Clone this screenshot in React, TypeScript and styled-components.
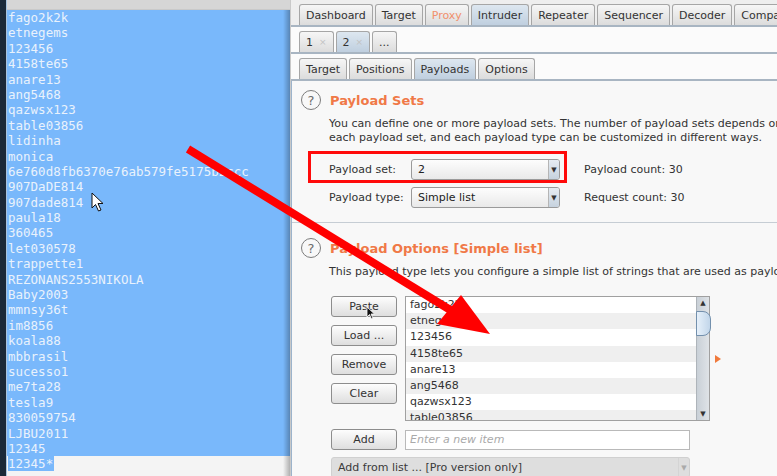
import React from "react";
import styled, { createGlobalStyle } from "styled-components";

const Global = createGlobalStyle`
  html, body { margin: 0; padding: 0; width: 777px; height: 476px; overflow: hidden; background: #f6f6f6; }
  * { box-sizing: border-box; }
`;

const Root = styled.div`
  position: relative;
  width: 777px;
  height: 476px;
  display: flex;
  overflow: hidden;
  font-family: "DejaVu Sans", "Liberation Sans", sans-serif;
`;

/* ---------- left text editor ---------- */
const LeftPane = styled.div`
  position: relative;
  width: 290px;
  flex-shrink: 0;
  display: flex;
  &::after {
    content: "";
    position: absolute;
    top: 10px;
    right: 0;
    bottom: 0;
    width: 7px;
    background: linear-gradient(to right, rgba(0, 0, 0, 0), rgba(0, 0, 0, 0.28));
  }
`;
const DarkEdge = styled.div`
  width: 6px;
  background: #1b2938;
`;
const Editor = styled.div`
  flex: 1;
  display: flex;
  flex-direction: column;
  border-left: 1px solid #a9c3dc;
  background: #f4f4f4;
`;
const TitleStrip = styled.div`
  height: 10px;
  background: #d6d6d6;
  border-bottom: 1px solid #c9c9c9;
`;
const SelBlock = styled.div`
  background: #79b8fb;
  padding-left: 1px;
`;
const Line = styled.div`
  height: 15.4px;
  line-height: 15.4px;
  font-family: "DejaVu Sans Mono", "Liberation Mono", monospace;
  font-size: 12.5px;
  color: #e9f2fc;
  white-space: nowrap;
  overflow: hidden;
`;
const LastLine = styled(Line)`
  padding-left: 1px;
`;
const SelSpan = styled.span`
  background: #79b8fb;
  padding-right: 1px;
`;

/* ---------- right burp window ---------- */
const RightPane = styled.div`
  flex: 1;
  display: flex;
  flex-direction: column;
  border-left: 1px solid #c9c9c9;
  background: #fafafa;
  min-width: 0;
`;
const TabRow = styled.div<{ $bg?: string }>`
  display: flex;
  align-items: flex-end;
  padding: 4px 0 0 8px;
  height: 27px;
  background: ${(p) => p.$bg || "#fbfbfb"};
  border-bottom: 2px solid #a8b5c2;
  overflow: hidden;
  flex-shrink: 0;
`;
const Tab = styled.div<{ $active?: boolean; $muted?: boolean }>`
  height: 21px;
  padding: 0 6px;
  margin-right: 2px;
  flex-shrink: 0;
  display: flex;
  align-items: center;
  gap: 6px;
  border: 1px solid #a6a6a6;
  border-bottom: none;
  border-radius: 3px 3px 0 0;
  background: ${(p) =>
    p.$active ? "linear-gradient(#dde7f0, #bfcfdf)" : "linear-gradient(#f6f6f6, #dcdcdc)"};
  font-size: 11px;
  color: ${(p) => (p.$muted ? "#f1906c" : "#333")};
  white-space: nowrap;
`;
const Close = styled.span`
  color: #c2c2c2;
  font-size: 9px;
`;

const Content = styled.div`
  flex: 1;
  display: flex;
  flex-direction: column;
  background: #f8f8f8;
  border-left: 1px solid #9cb3cb;
`;
const Section = styled.section<{ $top: number; $bottom?: number; $line?: boolean }>`
  padding: ${(p) => p.$top}px 0 ${(p) => p.$bottom || 0}px 9px;
  border-bottom: ${(p) => (p.$line ? "1px solid #c6cdd4" : "none")};
`;
const HeadRow = styled.div`
  display: flex;
  align-items: center;
  gap: 9px;
  height: 20px;
`;
const HelpIcon = styled.div`
  width: 20px;
  height: 20px;
  border-radius: 50%;
  border: 1.5px solid #7c7c7c;
  color: #6c6c6c;
  font-size: 13px;
  display: flex;
  align-items: center;
  justify-content: center;
`;
const Title = styled.h2`
  margin: 0;
  font-size: 13px;
  font-weight: bold;
  color: #f07947;
`;
const Desc = styled.p`
  margin: 7px 0 0 28px;
  font-size: 11px;
  line-height: 14px;
  color: #333;
  white-space: nowrap;
`;
const FormGrid = styled.div`
  margin: 14px 0 0 28px;
  display: grid;
  grid-template-columns: 82px 149px auto;
  row-gap: 7px;
  align-items: center;
  font-size: 11px;
  color: #333;
`;
const LabelCell = styled.div`
  position: relative;
  height: 21px;
  display: flex;
  align-items: center;
`;
const CountCell = styled.div`
  padding-left: 24px;
  white-space: nowrap;
`;
const Highlight = styled.div`
  position: absolute;
  left: -21px;
  top: -8px;
  width: 259px;
  height: 32px;
  border: 3px solid #ff0a0a;
  pointer-events: none;
`;
const Select = styled.div<{ $disabled?: boolean }>`
  height: 21px;
  display: flex;
  align-items: stretch;
  border: 1px solid ${(p) => (p.$disabled ? "#d0d0d0" : "#9a9a9a")};
  border-radius: 3px;
  background: ${(p) => (p.$disabled ? "#dedede" : "linear-gradient(#fdfdfd, #e9e9e9)")};
  font-size: 11px;
  color: ${(p) => (p.$disabled ? "#3a3a3a" : "#222")};
  overflow: hidden;
`;
const SelectText = styled.div`
  flex: 1;
  padding-left: 6px;
  display: flex;
  align-items: center;
  white-space: nowrap;
`;
const SelectArrow = styled.div<{ $disabled?: boolean }>`
  width: 11px;
  border-left: 1px solid ${(p) => (p.$disabled ? "#d4d4d4" : "#b5b5b5")};
  background: ${(p) => (p.$disabled ? "transparent" : "linear-gradient(#e6ecf2, #c6d2de)")};
  display: flex;
  align-items: center;
  justify-content: center;
  font-size: 7px;
  color: ${(p) => (p.$disabled ? "#aaa" : "#333")};
`;

const EditorArea = styled.div`
  margin: 17px 0 0 39px;
  display: flex;
  align-items: center;
`;
const ButtonCol = styled.div`
  display: flex;
  flex-direction: column;
  gap: 8px;
  align-self: flex-start;
`;
const Button = styled.div`
  position: relative;
  width: 66px;
  height: 21px;
  border: 1px solid #8d8d8d;
  border-radius: 3px;
  background: linear-gradient(#fdfdfd, #dedede);
  display: flex;
  align-items: center;
  justify-content: center;
  font-size: 11px;
  color: #333;
`;
const ListBox = styled.div`
  margin-left: 8px;
  width: 305px;
  height: 125px;
  border: 1px solid #a0a0a0;
  background: #fff;
  display: flex;
`;
const Items = styled.div`
  flex: 1;
  overflow: hidden;
`;
const Item = styled.div<{ $alt: boolean }>`
  height: 16.2px;
  line-height: 16.2px;
  padding-left: 4px;
  font-size: 11px;
  color: #333;
  background: ${(p) => (p.$alt ? "#efefef" : "#fff")};
`;
const Scroll = styled.div`
  position: relative;
  width: 13px;
  border-left: 1px solid #aeb4ba;
  background: linear-gradient(to right, #c9d0d7, #dfe3e7);
  display: flex;
  flex-direction: column;
  justify-content: space-between;
  align-items: center;
  font-size: 7px;
  color: #333;
  padding: 2px 0;
`;
const Thumb = styled.div`
  position: absolute;
  top: 14px;
  left: -1px;
  width: 15px;
  height: 25px;
  border: 1px solid #7390ad;
  border-radius: 0 8px 8px 0;
  background: linear-gradient(to right, #e6f0fa, #c2d6ea);
`;
const Marker = styled.div`
  margin-left: 5px;
  width: 0;
  height: 0;
  border-top: 4px solid transparent;
  border-bottom: 4px solid transparent;
  border-left: 6px solid #f07a3c;
`;
const AddRow = styled.div`
  margin: 8px 0 0 39px;
  display: flex;
  align-items: center;
  gap: 8px;
`;
const Input = styled.div`
  width: 285px;
  height: 20px;
  border: 1px solid #b9b9b9;
  background: #fff;
  padding-left: 4px;
  display: flex;
  align-items: center;
  font-size: 11px;
  font-style: italic;
  color: #a9a9a9;
`;
const FromList = styled.div`
  margin: 7px 0 0 39px;
  width: 359px;
`;

const Overlay = styled.svg`
  position: absolute;
  left: 0;
  top: 0;
  pointer-events: none;
`;

const lines = [
  "fago2k2k", "etnegems", "123456", "4158te65", "anare13", "ang5468", "qazwsx123",
  "table03856", "lidinha", "monica", "6e760d8fb6370e76ab579fe5175b2ccc", "907DaDE814",
  "907dade814", "paula18", "360465", "let030578", "trappette1", "REZONANS2553NIKOLA",
  "Baby2003", "mmnsy36t", "im8856", "koala88", "mbbrasil", "sucesso1", "me7ta28",
  "tesla9", "830059754", "LJBU2011", "12345",
];

const mainTabs = [
  { label: "Dashboard" }, { label: "Target" }, { label: "Proxy", muted: true },
  { label: "Intruder", active: true }, { label: "Repeater" }, { label: "Sequencer" },
  { label: "Decoder" }, { label: "Comparer" },
];

const innerTabs = [
  { label: "Target" }, { label: "Positions" }, { label: "Payloads", active: true }, { label: "Options" },
];

export default function App() {
  return (
    <Root>
      <Global />
      <LeftPane>
        <DarkEdge />
        <Editor>
          <TitleStrip />
          <SelBlock>
            {lines.map((l, i) => (
              <Line key={i}>{l}</Line>
            ))}
          </SelBlock>
          <LastLine>
            <SelSpan>12345*</SelSpan>
          </LastLine>
        </Editor>
      </LeftPane>

      <RightPane>
        <TabRow $bg="#eeeeee">
          {mainTabs.map((t) => (
            <Tab key={t.label} $active={t.active} $muted={t.muted}>
              {t.label}
            </Tab>
          ))}
        </TabRow>
        <TabRow>
          <Tab>
            1<Close>×</Close>
          </Tab>
          <Tab $active>
            2<Close>×</Close>
          </Tab>
          <Tab>...</Tab>
        </TabRow>
        <TabRow>
          {innerTabs.map((t) => (
            <Tab key={t.label} $active={t.active}>
              {t.label}
            </Tab>
          ))}
        </TabRow>

        <Content>
          <Section $top={9} $bottom={14} $line>
            <HeadRow>
              <HelpIcon>?</HelpIcon>
              <Title>Payload Sets</Title>
            </HeadRow>
            <Desc>
              You can define one or more payload sets. The number of payload sets depends on the attack type defined in the Positions tab.
              <br />
              each payload set, and each payload type can be customized in different ways.
            </Desc>
            <FormGrid>
              <LabelCell>
                <Highlight />
                Payload set:
              </LabelCell>
              <Select>
                <SelectText>2</SelectText>
                <SelectArrow>▼</SelectArrow>
              </Select>
              <CountCell>Payload count: 30</CountCell>
              <LabelCell>Payload type:</LabelCell>
              <Select>
                <SelectText>Simple list</SelectText>
                <SelectArrow>▼</SelectArrow>
              </Select>
              <CountCell>Request count: 30</CountCell>
            </FormGrid>
          </Section>

          <Section $top={15}>
            <HeadRow>
              <HelpIcon>?</HelpIcon>
              <Title>Payload Options [Simple list]</Title>
            </HeadRow>
            <Desc>This payload type lets you configure a simple list of strings that are used as payloads.</Desc>
          </Section>

          <EditorArea>
            <ButtonCol>
              <Button>
                Paste
                <Overlay width="10" height="14" viewBox="0 0 10 14" style={{ left: 34, top: 9 }}>
                  <path d="M1 1 L1 11 L3.5 8.5 L5.5 13 L7 12.3 L5 8 L8.5 8 Z" fill="#111" stroke="#fff" strokeWidth="0.8" />
                </Overlay>
              </Button>
              <Button>Load ...</Button>
              <Button>Remove</Button>
              <Button>Clear</Button>
            </ButtonCol>
            <ListBox>
              <Items>
                {lines.slice(0, 8).map((l, i) => (
                  <Item key={i} $alt={i % 2 === 1}>
                    {l}
                  </Item>
                ))}
              </Items>
              <Scroll>
                <span>▲</span>
                <Thumb />
                <span>▼</span>
              </Scroll>
            </ListBox>
            <Marker />
          </EditorArea>

          <AddRow>
            <Button>Add</Button>
            <Input>Enter a new item</Input>
          </AddRow>
          <FromList>
            <Select $disabled>
              <SelectText>Add from list ... [Pro version only]</SelectText>
              <SelectArrow $disabled>▼</SelectArrow>
            </Select>
          </FromList>
        </Content>
      </RightPane>

      <Overlay width="777" height="476" viewBox="0 0 777 476">
        <line x1="188" y1="149" x2="452" y2="311" stroke="#ff0000" strokeWidth="8" />
        <polygon points="490,334 437,324 461,295" fill="#ff0000" />
        <path
          d="M92 193 L92 208 L95.5 204.5 L98.5 211 L101 210 L98 203.5 L103 203.5 Z"
          fill="#fff"
          stroke="#111"
          strokeWidth="1"
        />
      </Overlay>
    </Root>
  );
}
